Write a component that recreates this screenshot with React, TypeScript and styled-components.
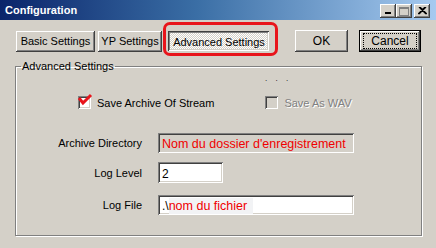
import React from 'react';
import styled, { createGlobalStyle, css } from 'styled-components';

const GlobalStyle = createGlobalStyle`
  html, body {
    margin: 0;
    padding: 0;
    background: #d4d0c8;
  }
  body {
    font-family: "Liberation Sans", Arial, sans-serif;
    font-size: 11px;
    color: #000;
  }
`;

const raised = css`
  box-shadow: inset -1px -1px #404040, inset 1px 1px #ffffff,
    inset -2px -2px #808080, inset 2px 2px #d4d0c8;
`;

const sunken = css`
  box-shadow: inset 1px 1px #808080, inset -1px -1px #ffffff,
    inset 2px 2px #404040, inset -2px -2px #d4d0c8;
`;

const Window = styled.div`
  width: 436px;
  height: 248px;
  background: #d4d0c8;
  display: flex;
  flex-direction: column;
  overflow: hidden;
`;

const TitleBar = styled.div`
  height: 20px;
  padding: 0 6px 0 5px;
  display: flex;
  align-items: center;
  justify-content: space-between;
  background: linear-gradient(90deg, #0a246a 0%, #3a6ea5 45%, #a6caf0 100%);
`;

const Title = styled.span`
  color: #fff;
  font-weight: bold;
  font-size: 11px;
  margin-top: -1px;
`;

const Controls = styled.div`
  display: flex;
  align-items: center;
  margin-top: 2px;
`;

const CtrlButton = styled.div<{ $gap?: number }>`
  width: 16px;
  height: 14px;
  margin-left: ${({ $gap }) => $gap ?? 0}px;
  background: #d4d0c8;
  ${raised};
  display: flex;
  align-items: center;
  justify-content: center;
`;

const Body = styled.div`
  padding: 10px 14px 0 15px;
  display: flex;
  flex-direction: column;
`;

const TopRow = styled.div`
  display: flex;
  align-items: center;
  height: 22px;
`;

const Tabs = styled.div`
  display: flex;
  align-items: center;
  padding-left: 1px;
`;

const Button = styled.div<{ $w: number; $h?: number; $ml?: number; $fs?: number; $pressed?: boolean }>`
  width: ${({ $w }) => $w}px;
  height: ${({ $h }) => $h ?? 21}px;
  margin-left: ${({ $ml }) => $ml ?? 0}px;
  font-size: ${({ $fs }) => $fs ?? 11}px;
  white-space: nowrap;
  box-sizing: border-box;
  display: flex;
  align-items: center;
  justify-content: center;
  background: #d4d0c8;
  ${({ $pressed }) =>
    $pressed
      ? css`
          box-shadow: inset 1px 1px #404040, inset -1px -1px #ffffff,
            inset 2px 2px #808080, inset -2px -2px #d4d0c8;
          background-image: repeating-conic-gradient(#ffffff 0 25%, #d4d0c8 0 50%);
          background-size: 2px 2px;
          padding-top: 2px;
          padding-left: 1px;
        `
      : raised};
`;

const Highlight = styled.div`
  position: relative;
  margin-left: 6px;
  &::after {
    content: '';
    position: absolute;
    left: -5px;
    top: -9px;
    right: -9px;
    bottom: -5px;
    border: 3px solid #e8141b;
    border-radius: 7px;
  }
`;

const Actions = styled.div`
  display: flex;
  margin-left: 26px;
  gap: 11px;
`;

const DefaultButton = styled.div`
  width: 62px;
  height: 22px;
  box-sizing: border-box;
  border: 1px solid #000;
  background: #d4d0c8;
  ${raised};
  display: flex;
  align-items: center;
  justify-content: center;
  font-size: 12px;
`;

const Focus = styled.span`
  border: 1px dotted #000;
  padding: 1px 7px 1px 7px;
  line-height: 12px;
`;

const Group = styled.fieldset`
  margin: 8px 0 0 0;
  padding: 0;
  width: 407px;
  height: 176px;
  box-sizing: border-box;
  border: 1px solid #808080;
  box-shadow: inset 1px 1px 0 #ffffff, 1px 1px 0 #ffffff;
  position: relative;
`;

const Legend = styled.legend`
  padding: 0 1px;
  margin-left: 5px;
  font-size: 11px;
  line-height: 12px;
`;

const CheckRow = styled.div`
  display: flex;
  align-items: center;
  margin-top: 24px;
  padding-left: 62px;
`;

const CheckItem = styled.div<{ $ml?: number; $disabled?: boolean }>`
  display: flex;
  align-items: center;
  margin-left: ${({ $ml }) => $ml ?? 0}px;
  font-size: 11px;
  color: ${({ $disabled }) => ($disabled ? '#808080' : '#000')};
  text-shadow: ${({ $disabled }) => ($disabled ? '1px 1px 0 #ffffff' : 'none')};
`;

const Box = styled.span<{ $disabled?: boolean }>`
  width: 13px;
  height: 13px;
  box-sizing: border-box;
  background: ${({ $disabled }) => ($disabled ? '#d4d0c8' : '#ffffff')};
  ${sunken};
  margin-right: 6px;
  position: relative;
`;

const Tick = styled.svg`
  position: absolute;
  left: -1px;
  top: -3px;
`;

const Form = styled.div`
  display: flex;
  flex-direction: column;
  margin-top: 24px;
`;

const FormRow = styled.div<{ $mt?: number }>`
  display: flex;
  align-items: center;
  margin-top: ${({ $mt }) => $mt ?? 0}px;
`;

const Label = styled.div`
  width: 126px;
  margin-right: 16px;
  text-align: right;
  font-size: 11px;
`;

const Field = styled.div<{ $w: number; $h?: number; $readOnly?: boolean }>`
  width: ${({ $w }) => $w}px;
  height: ${({ $h }) => $h ?? 20}px;
  box-sizing: border-box;
  background: ${({ $readOnly }) => ($readOnly ? '#d4d0c8' : '#ffffff')};
  ${sunken};
  padding: 2px 4px 0 4px;
  font-size: 12px;
  line-height: 16px;
  display: flex;
  align-items: center;
  white-space: nowrap;
`;

const Red = styled.span<{ $shade?: boolean }>`
  color: #f00000;
  font-size: 12.5px;
  background: ${({ $shade }) => ($shade ? '#f2f3f5' : 'transparent')};
  padding-right: ${({ $shade }) => ($shade ? '6px' : '0')};
`;

const Dots = styled.div`
  position: absolute;
  top: 2px;
  left: 249px;
  font-size: 8px;
  letter-spacing: 3px;
  color: #000;
`;

export default function App() {
  return (
    <>
      <GlobalStyle />
      <Window>
        <TitleBar>
          <Title>Configuration</Title>
          <Controls>
            <CtrlButton>
              <svg width="8" height="8" viewBox="0 0 8 8">
                <rect x="1" y="5" width="6" height="2" fill="#000" />
              </svg>
            </CtrlButton>
            <CtrlButton>
              <svg width="10" height="9" viewBox="0 0 10 9">
                <rect x="0.5" y="0.5" width="9" height="8" fill="none" stroke="#808080" />
                <rect x="0.5" y="1" width="9" height="1" fill="#808080" />
              </svg>
            </CtrlButton>
            <CtrlButton $gap={2}>
              <svg width="9" height="8" viewBox="0 0 9 8">
                <path d="M1 0 L8 7 M8 0 L1 7 M2 0 L9 7 M7 0 L0 7" stroke="#000" strokeWidth="1.2" />
              </svg>
            </CtrlButton>
          </Controls>
        </TitleBar>
        <Body>
          <TopRow>
            <Tabs>
              <Button $w={79}>Basic Settings</Button>
              <Button $w={64} $ml={3}>YP Settings</Button>
              <Highlight>
                <Button $w={101} $h={20} $pressed>Advanced Settings</Button>
              </Highlight>
            </Tabs>
            <Actions>
              <Button $w={53} $h={22} $fs={12}>OK</Button>
              <DefaultButton>
                <Focus>Cancel</Focus>
              </DefaultButton>
            </Actions>
          </TopRow>
          <Group>
            <Legend>Advanced Settings</Legend>
            <Dots>. . .</Dots>
            <CheckRow>
              <CheckItem>
                <Box>
                  <Tick width="16" height="14" viewBox="0 0 16 14">
                    <path d="M2 5 L6 10 L14 2" fill="none" stroke="#e8141b" strokeWidth="3" />
                  </Tick>
                </Box>
                Save Archive Of Stream
              </CheckItem>
              <CheckItem $ml={51} $disabled>
                <Box $disabled />
                Save As WAV
              </CheckItem>
            </CheckRow>
            <Form>
              <FormRow>
                <Label>Archive Directory</Label>
                <Field $w={196} $readOnly>
                  <Red>Nom du dossier d'enregistrement</Red>
                </Field>
              </FormRow>
              <FormRow $mt={9}>
                <Label>Log Level</Label>
                <Field $w={65} $h={21}>2</Field>
              </FormRow>
              <FormRow $mt={12}>
                <Label>Log File</Label>
                <Field $w={196}>
                  .\<Red $shade>nom du fichier</Red>
                </Field>
              </FormRow>
            </Form>
          </Group>
        </Body>
      </Window>
    </>
  );
}
